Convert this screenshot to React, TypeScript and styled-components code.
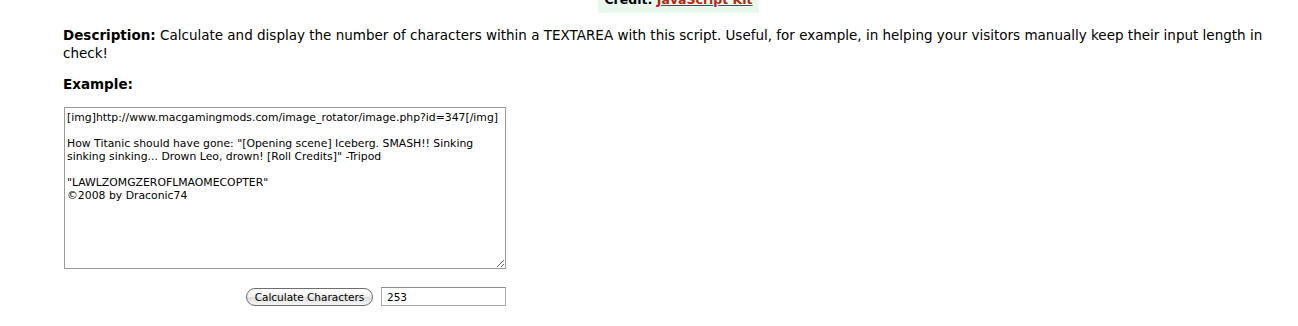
import { createGlobalStyle } from 'styled-components';
import styled from 'styled-components';

const GlobalStyle = createGlobalStyle`
  html, body {
    margin: 0;
    padding: 0;
    background: #ffffff;
    overflow: hidden;
  }
  body {
    font-family: 'DejaVu Sans', Verdana, sans-serif;
    color: #000000;
  }
`;

const Page = styled.div`
  display: flex;
  flex-direction: column;
  padding: 0 4px 0 63px;
  width: 1231px;
`;

const Credit = styled.div`
  align-self: center;
  margin-top: -11px;
  padding: 2px 0 4px;
  width: 161px;
  background: #e8f8ec;
  text-align: center;
  white-space: nowrap;
  font-size: 12.5px;
  line-height: 18px;
  font-weight: bold;

  a {
    color: #b02a12;
    text-decoration: underline;
  }
`;

const Paragraph = styled.p`
  margin: 13px 0 0;
  font-size: 13.5px;
  line-height: 18px;
`;

const Heading = styled.p`
  margin: 13px 0 0;
  font-size: 13.5px;
  line-height: 18px;
  font-weight: bold;
`;

const Form = styled.form`
  display: flex;
  flex-direction: column;
  width: 442px;
  margin: 14px 0 0 1px;
`;

const Area = styled.textarea`
  box-sizing: border-box;
  width: 442px;
  height: 162px;
  margin: 0;
  padding: 3px 2px;
  border: 1px solid #9a9a9a;
  font-family: 'DejaVu Sans', Verdana, sans-serif;
  font-size: 10.85px;
  line-height: 13px;
  color: #000;
  resize: both;
  outline: none;
`;

const Controls = styled.div`
  display: flex;
  justify-content: flex-end;
  align-items: center;
  gap: 8px;
  margin-top: 18px;
`;

const Button = styled.button`
  box-sizing: border-box;
  width: 127px;
  height: 18px;
  padding: 0;
  border: 1px solid #6e6e6e;
  border-radius: 9px;
  background: linear-gradient(#ffffff, #f0f0f0 50%, #dedede 51%, #f4f4f4);
  font-family: 'DejaVu Sans', Verdana, sans-serif;
  font-size: 10.5px;
  line-height: 16px;
  color: #000;
`;

const Count = styled.input`
  box-sizing: border-box;
  width: 125px;
  height: 19px;
  margin: 0;
  padding: 1px 5px 0;
  border: 1px solid #a8a8a8;
  border-top-color: #8c8c8c;
  font-family: 'DejaVu Sans', Verdana, sans-serif;
  font-size: 10.5px;
  color: #000;
  outline: none;
`;

const sample = `[img]http://www.macgamingmods.com/image_rotator/image.php?id=347[/img]

How Titanic should have gone: "[Opening scene] Iceberg. SMASH!! Sinking sinking sinking... Drown Leo, drown! [Roll Credits]" -Tripod

"LAWLZOMGZEROFLMAOMECOPTER"
\u00a92008 by Draconic74`;

export default function App() {
  return (
    <>
      <GlobalStyle />
      <Page>
        <Credit>
          Credit: <a href="#">JavaScript Kit</a>
        </Credit>
        <Paragraph>
          <b>Description:</b> Calculate and display the number of characters
          within a TEXTAREA with this script. Useful, for example, in helping
          your visitors manually keep their input length in check!
        </Paragraph>
        <Heading>Example:</Heading>
        <Form onSubmit={e => e.preventDefault()}>
          <Area defaultValue={sample} spellCheck={false} />
          <Controls>
            <Button type="button">Calculate Characters</Button>
            <Count type="text" defaultValue="253" />
          </Controls>
        </Form>
      </Page>
    </>
  );
}
